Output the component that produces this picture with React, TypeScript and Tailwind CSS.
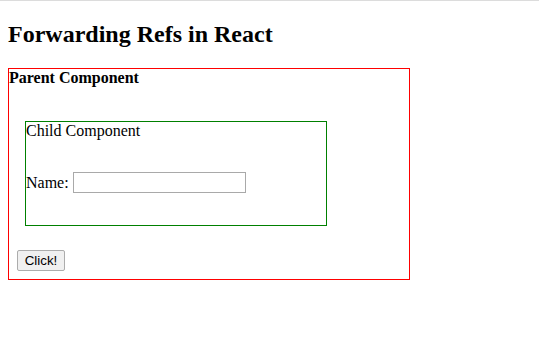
import React from "react";

export default function App() {
  return (
    <div className="min-h-[361px] bg-white border-t border-[#dcdcdc] px-2 text-black" style={{ fontFamily: '"Liberation Serif", "Times New Roman", serif' }}>
      <h2 className="text-[24px] font-bold leading-[27px] pt-[20px] pb-[20px]">Forwarding Refs in React</h2>
      <div className="w-[402px] h-[212px] border border-[#ff0000] flex flex-col items-start">
        <div className="text-[16px] font-bold leading-[18px]">Parent Component</div>
        <div className="ml-[16px] mt-[34px] w-[302px] h-[105px] border border-[#008000] flex flex-col items-start">
          <div className="text-[16px] leading-[18px]">Child Component</div>
          <div className="mt-[32px] flex items-center h-[21px] text-[16px]">
            <span className="leading-[18px]">Name:</span>
            <input type="text" className="ml-[4px] w-[173px] h-[21px] border border-[#a9a9a9] bg-white outline-none" style={{ fontFamily: '"Liberation Sans", Arial, sans-serif', fontSize: '13.33px' }} />
          </div>
        </div>
        <button className="ml-[8px] mt-[24px] w-[48px] h-[21px] border border-[#acacac] rounded-[2px] bg-[#f0f0f0] text-[13.33px] leading-[17px] text-black" style={{ fontFamily: '"Liberation Sans", Arial, sans-serif' }}>Click!</button>
      </div>
    </div>
  );
}
